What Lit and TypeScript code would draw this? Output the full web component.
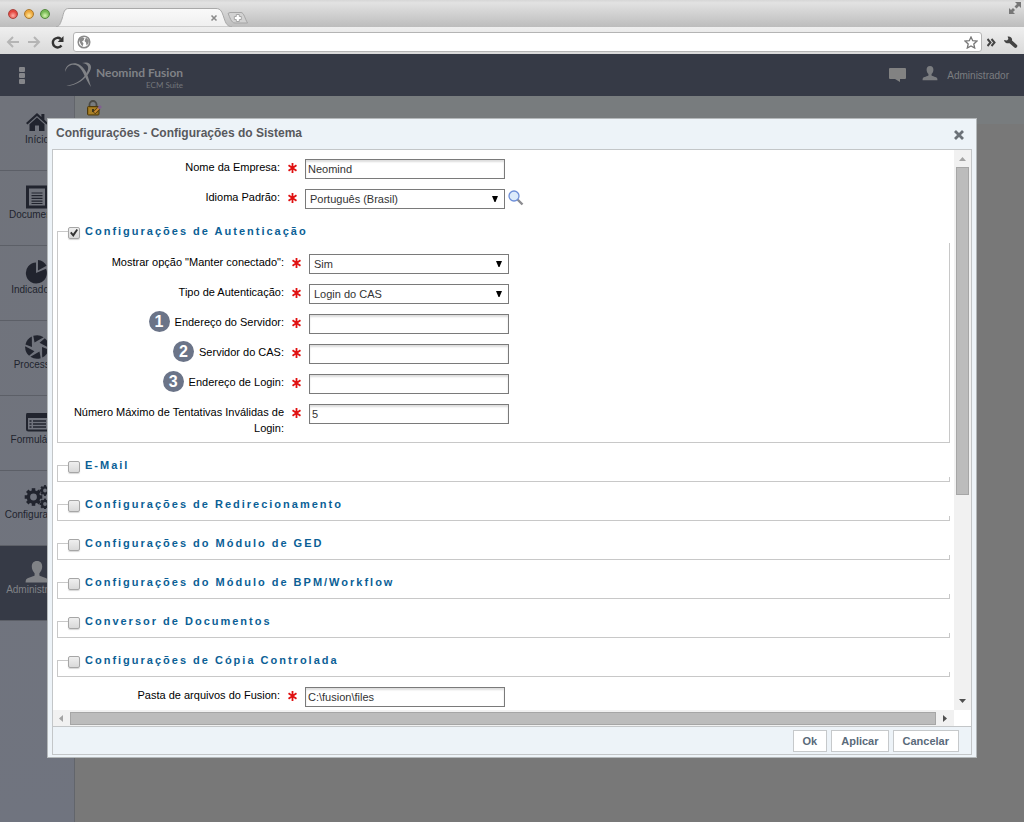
import { LitElement, html, css, svg, nothing, TemplateResult } from "lit";
import { customElement, property } from "lit/decorators.js";

type Field = {
  id: string;
  label: string;
  kind: "text" | "select";
  value: string;
  step?: number;
  search?: boolean;
};

type Section = { id: string; title: string; open: boolean; fields: Field[] };

const NAV = [
  { id: "home", label: "Início" },
  { id: "docs", label: "Documentos" },
  { id: "chart", label: "Indicadores" },
  { id: "process", label: "Processos" },
  { id: "forms", label: "Formulários" },
  { id: "gears", label: "Configurações" },
  { id: "user", label: "Administrador" },
];

const TOP_FIELDS: Field[] = [
  { id: "company", label: "Nome da Empresa:", kind: "text", value: "Neomind" },
  { id: "language", label: "Idioma Padrão:", kind: "select", value: "Português (Brasil)", search: true },
];

const BOTTOM_FIELDS: Field[] = [
  { id: "folder", label: "Pasta de arquivos do Fusion:", kind: "text", value: "C:\\fusion\\files" },
];

const SECTIONS: Section[] = [
  {
    id: "auth",
    title: "Configurações de Autenticação",
    open: true,
    fields: [
      { id: "keep", label: 'Mostrar opção "Manter conectado":', kind: "select", value: "Sim" },
      { id: "type", label: "Tipo de Autenticação:", kind: "select", value: "Login do CAS" },
      { id: "server", label: "Endereço do Servidor:", kind: "text", value: "", step: 1 },
      { id: "cas", label: "Servidor do CAS:", kind: "text", value: "", step: 2 },
      { id: "login", label: "Endereço de Login:", kind: "text", value: "", step: 3 },
      { id: "tries", label: "Número Máximo de Tentativas Inválidas de Login:", kind: "text", value: "5" },
    ],
  },
  { id: "mail", title: "E-Mail", open: false, fields: [] },
  { id: "redirect", title: "Configurações de Redirecionamento", open: false, fields: [] },
  { id: "ged", title: "Configurações do Módulo de GED", open: false, fields: [] },
  { id: "bpm", title: "Configurações do Módulo de BPM/Workflow", open: false, fields: [] },
  { id: "converter", title: "Conversor de Documentos", open: false, fields: [] },
  { id: "copy", title: "Configurações de Cópia Controlada", open: false, fields: [] },
];

const gear = (cx: number, cy: number, r: number, teeth: number, hole: number) => {
  const spokes = [];
  for (let i = 0; i < teeth; i++) {
    spokes.push(svg`<rect x=${cx - r * 0.2} y=${cy - r} width=${r * 0.4} height=${r * 0.5}
      transform=${`rotate(${(360 / teeth) * i} ${cx} ${cy})`} fill="currentColor"/>`);
  }
  return svg`${spokes}<circle cx=${cx} cy=${cy} r=${(r * 0.78 + hole) / 2} fill="none"
    stroke="currentColor" stroke-width=${r * 0.78 - hole}/>`;
};

const blades = [0, 60, 120, 180, 240, 300].map(
  (a) => svg`<path d="M8.300 0.800 A11.800 11.800 0 0 1 18.600 2.200 L9.500 7.600 Z" transform=${`rotate(${a} 12 12)`} />`,
);

const ICONS: Record<string, TemplateResult> = {
  home: html`<svg viewBox="0 0 24 24" width="24" height="24" fill="currentColor"><path d="M12 3 L1 13 L2.5 14.5 L12 6 L21.5 14.5 L23 13 L19.4 9.7 V4 H16.4 V7 Z"/><path d="M12 7.6 L4.5 14.3 V21 H10 V15.5 H14 V21 H19.5 V14.3 Z"/></svg>`,
  docs: html`<svg viewBox="0 0 24 24" width="24" height="24"><path fill="none" stroke="currentColor" stroke-width="3" d="M2.500 2 h19 v20 h-19 z"/><path stroke="currentColor" stroke-width="1.200" d="M6.500 8h11M6.500 10.700h11M6.500 13.400h11M6.500 16.100h11M6.500 18.500h11"/></svg>`,
  chart: html`<svg viewBox="0 0 24 24" width="24" height="24" fill="currentColor"><path d="M11 2.500 V13 L21 8.800 A10.500 10.500 0 1 1 11 2.500 Z"/><path d="M13 0 A11 11 0 0 1 21.500 5.800 L13 10.500 Z"/></svg>`,
  process: html`<svg viewBox="0 0 24 24" width="24" height="24" fill="currentColor">${blades}</svg>`,
  forms: html`<svg viewBox="0 0 24 24" width="24" height="24"><rect x="2" y="4" width="22" height="16.500" rx="1.500" fill="none" stroke="currentColor" stroke-width="2"/><rect x="1.500" y="3" width="22.500" height="5" fill="currentColor"/><path stroke="currentColor" stroke-width="1.300" d="M4.500 11h2M8 11h13M4.500 14h2M8 14h13M4.500 17h2M8 17h13"/></svg>`,
  gears: html`<svg viewBox="0 0 26 24" width="26" height="24">${gear(9.5, 12, 8.8, 8, 3.4)}${gear(21, 5.5, 5.4, 8, 1.9)}${gear(21, 19, 5.4, 8, 1.9)}</svg>`,
  user: html`<svg viewBox="0 0 24 24" width="24" height="24" fill="currentColor"><path d="M12 1 c3.6 0 5.2 2.4 5.2 5.6 0 2.800 -1.200 5.200 -2.800 6.600 v2.300 c1 1.200 7.600 2 8.600 4.300 .3 .8 .4 1.600 .4 2.700 H.6 c0 -1.100 .1 -1.900 .4 -2.700 1 -2.300 7.600 -3.100 8.600 -4.300 v-2.300 C8 11.800 6.800 9.400 6.800 6.600 6.800 3.400 8.400 1 12 1 z"/></svg>`,
};

@customElement("browser-bar")
export class BrowserBar extends LitElement {
  static styles = css`
    :host { display: block; }
    svg { display: block; }
    .tabs {
      display: flex;
      align-items: flex-end;
      height: 27px;
      background: linear-gradient(#d6d6d6, #e2e2e2 10%, #bdbdbd);
    }
    .lights { display: flex; gap: 6px; padding: 0 6px 8px 8px; }
    .light { width: 10px; height: 10px; border-radius: 50%; box-sizing: border-box; }
    .red { background: radial-gradient(circle at 50% 70%, #ffb0a8, #e2463f 60%); border: 1px solid #a8433d; }
    .amber { background: radial-gradient(circle at 50% 70%, #ffe9a0, #eda63a 60%); border: 1px solid #a9772c; }
    .green { background: radial-gradient(circle at 50% 70%, #d6f5b0, #76b955 60%); border: 1px solid #52883c; }
    .grow { flex: 1; }
    .newtab { margin: 0 0 1px -5px; }
    .expand { align-self: flex-start; padding: 2px 3px; }
    .tools {
      display: flex;
      align-items: center;
      height: 27px;
      padding: 3px 6px 0;
      box-sizing: border-box;
      gap: 9px;
      background: linear-gradient(#efefef, #d9d9d9);
    }
    .nav { display: flex; align-items: center; gap: 9px; }
    .address {
      flex: 1;
      display: flex;
      align-items: center;
      gap: 6px;
      height: 20px;
      box-sizing: border-box;
      margin-right: -4px;
      padding: 0 3px;
      background: #fff;
      border: 1px solid #b4b4b4;
      border-radius: 3px;
    }
    .url { flex: 1; min-width: 0; border: 0; padding: 0; outline: 0; background: transparent; font: 11px "Liberation Sans", Arial, sans-serif; }
    .more { display: flex; gap: 8px; }
  `;

  render() {
    return html`
      <div class="tabs">
        <div class="lights"><i class="light red"></i><i class="light amber"></i><i class="light green"></i></div>
        <svg width="176" height="20" viewBox="0 0 176 20">
          <defs><linearGradient id="t" x1="0" y1="0" x2="0" y2="1"><stop offset="0" stop-color="#fafafa"/><stop offset="1" stop-color="#efefef"/></linearGradient></defs>
          <path d="M0 20 C4 19 4 17 6 12 C8 5 8 1.500 13 1.500 H160 C165 1.500 166 5 168 11 C170 17 171 19 176 20 Z" fill="url(#t)" stroke="#a9a9a9"/>
          <path d="M155.500 8.500 l5 5 m0 -5 l-5 5" stroke="#8b8b8b" stroke-width="1.600"/>
        </svg>
        <svg class="newtab" width="22" height="16" viewBox="0 0 22 16">
          <path d="M3 2.500 H14 C17 2.500 18 9 20.500 13 H8 C4 13 3 7 1 3.500 Z" fill="#d2d2d2" stroke="#a5a5a5"/>
          <path d="M9.300 4.500 h3 v2 h2 v3 h-2 v2 h-3 v-2 h-2 v-3 h2 z" fill="#fff" stroke="#a5a5a5"/>
        </svg>
        <span class="grow"></span>
        <svg class="expand" width="12" height="12" viewBox="0 0 12 12" fill="#777"><path d="M6 0 h6 v6 l-2 -2 -2.500 2.500 -2 -2 L8 2 z M0 6 l2 2 2 -2 2 2 -2 2 2 2 H0 z"/></svg>
      </div>
      <div class="tools">
        <div class="nav">
          <svg width="13" height="12" viewBox="0 0 13 12" fill="none" stroke="#b5b5b5" stroke-width="2"><path d="M13 6 H2 M7 1 L2 6 l5 5"/></svg>
          <svg width="13" height="12" viewBox="0 0 13 12" fill="none" stroke="#b5b5b5" stroke-width="2"><path d="M0 6 H11 M6 1 l5 5 -5 5"/></svg>
          <svg width="14" height="13" viewBox="0 0 14 13"><path d="M11.500 9.500 A4.800 4.800 0 1 1 10.800 3" fill="none" stroke="#333" stroke-width="2.400"/><path d="M13.500 0 V6 H7.700 Z" fill="#333"/></svg>
        </div>
        <div class="address">
          <svg width="14" height="14" viewBox="0 0 14 14"><circle cx="7" cy="7" r="5.800" fill="#fff" stroke="#8a8a8a" stroke-width="1.500"/><path d="M2 4 l3 -2 2.500 1 -1 2.500 -1.500 1 1.500 2 -1 3 -1.500 -2 -1.500 -3 z M9 2.500 l3 3 -.500 3 -2 2 -.500 -3 -1.500 -1.500 z" fill="#8a8a8a"/></svg>
          <input class="url" type="text" aria-label="Endereço" />
          <svg width="14" height="13" viewBox="0 0 14 13"><path d="M7 1 L8.700 4.700 13 5.100 9.800 7.900 10.700 12 7 9.900 3.300 12 4.200 7.900 1 5.100 5.300 4.700 Z" fill="#fff" stroke="#777" stroke-width="1.300"/></svg>
        </div>
        <div class="more">
          <svg width="9" height="13" viewBox="0 0 9 13" fill="none" stroke="#444" stroke-width="2"><path d="M.500 3 L3.500 6.500 .500 10 M4.500 3 L7.500 6.500 4.500 10"/></svg>
          <svg width="14" height="13" viewBox="0 0 14 13"><path d="M0 4 l3 .5 1.400 -1.500 -.8 -2.500 C6.500 0 8.600 1.800 8 4.500 L13 9 c1.200 1.400 -.8 3.800 -2.600 2.600 L5.600 7.200 C2.800 7.800 .4 6.600 0 4 z" fill="#444"/></svg>
        </div>
      </div>`;
  }
}

@customElement("form-row")
export class FormRow extends LitElement {
  @property({ attribute: false }) field!: Field;

  static styles = css`
    :host { display: block; }
    svg { display: block; }
    .row {
      display: grid;
      grid-template-columns: 223px 9px 1fr;
      column-gap: 8px;
      align-items: start;
      font-size: 11px;
      line-height: 16px;
    }
    .caption { display: flex; justify-content: flex-end; align-items: center; gap: 5px; text-align: right; color: #000; }
    .step {
      flex: none;
      width: 21px;
      height: 21px;
      margin: -3px 0 -2px;
      border-radius: 50%;
      background: #6b7488;
      color: #fff;
      font-weight: 700;
      font-size: 16px;
      line-height: 21px;
      text-align: center;
    }
    .star { margin-top: 4px; }
    .control { display: flex; gap: 3px; }
    .box {
      width: 200px;
      height: 20px;
      box-sizing: border-box;
      margin: 0;
      padding: 0 2px;
      border: 1px solid #7a7a7a;
      border-radius: 0;
      background: #fff;
      color: #333;
      font: inherit;
      outline: 0;
    }
    .text { box-shadow: inset 0 2px 2px #dedede; }
    .pick { position: relative; }
    .drop { appearance: none; padding: 0 4px; display: block; }
    .arrow { position: absolute; right: 7px; top: 7px; pointer-events: none; }
    .find { border: 0; padding: 0; margin: 1px 0 0; background: none; height: 16px; }
  `;

  render() {
    const f = this.field;
    return html`<div class="row">
      <label class="caption" for=${f.id}>
        ${f.step ? html`<span class="step">${f.step}</span>` : nothing}<span>${f.label}</span>
      </label>
      <svg class="star" width="9" height="10" viewBox="0 0 9 10" stroke="#e01010" stroke-width="1.800"><path d="M4.500 0 V10 M.500 2.200 L8.500 7.800 M8.500 2.200 L.500 7.800"/></svg>
      <div class="control">
        ${f.kind === "text"
          ? html`<input id=${f.id} class="box text" type="text" .value=${f.value} />`
          : html`<div class="pick">
              <select id=${f.id} class="box drop"><option>${f.value}</option></select>
              <svg class="arrow" width="6" height="6" viewBox="0 0 6 6"><path d="M0 0 H6 L3.500 6 H2.500 Z" fill="#000"/></svg>
            </div>`}
        ${f.search
          ? html`<button class="find" type="button" aria-label="Pesquisar">
              <svg width="16" height="16" viewBox="0 0 16 16"><path d="M9.500 9.500 L14.500 14.500" stroke="#8c8c90" stroke-width="2.400"/><circle cx="6" cy="6" r="5" fill="#dcebfb" stroke="#6e8fd8" stroke-width="1.300"/></svg>
            </button>`
          : nothing}
      </div>
    </div>`;
  }
}

@customElement("form-section")
export class FormSection extends LitElement {
  @property({ attribute: false }) section!: Section;

  static styles = css`
    :host { display: block; }
    .set { margin: 0; padding: 0 3px 4px; border: 1px solid #c8c8c8; min-width: 0; }
    /* The heading strip runs past the frame, so the top and right rules stop beside it. */
    .head { width: 100%; height: 24px; margin: 0 0 0 7px; padding: 0; background: #fff; }
    .title {
      display: flex;
      align-items: center;
      gap: 5px;
      color: #0b5f96;
      font-size: 11px;
      font-weight: 700;
      line-height: 24px;
      letter-spacing: 2px;
    }
    .tick {
      appearance: none;
      flex: none;
      width: 12px;
      height: 12px;
      margin: 4px 0 0;
      border: 1px solid #a6a6a6;
      border-radius: 2px;
      background: linear-gradient(#efefef, #d9d9d9);
      box-shadow: 0 1px 1px #d8d8d8;
      display: grid;
      place-items: center;
    }
    .tick:checked::before {
      content: "";
      width: 8px;
      height: 8px;
      background: #333;
      clip-path: polygon(0 50%, 20% 35%, 38% 58%, 82% 0, 100% 14%, 42% 100%);
    }
    .rows { display: grid; gap: 10px; padding: 11px 0 2px; }
  `;

  render() {
    const s = this.section;
    return html`<fieldset class="set">
      <legend class="head">
        <label class="title"><input class="tick" type="checkbox" .checked=${s.open} />${s.title}</label>
      </legend>
      ${s.fields.length
        ? html`<div class="rows">${s.fields.map((f) => html`<form-row .field=${f}></form-row>`)}</div>`
        : nothing}
    </fieldset>`;
  }
}

@customElement("settings-dialog")
export class SettingsDialog extends LitElement {
  static styles = css`
    :host { display: flex; min-width: 0; flex: 1; }
    svg { display: block; }
    .dialog {
      flex: 1;
      min-width: 0;
      display: flex;
      flex-direction: column;
      box-sizing: border-box;
      padding: 0 4px 2px;
      border: 1px solid #b4b8ba;
      background: #edf3f8;
    }
    .bar { display: flex; align-items: center; justify-content: space-between; height: 30px; padding: 0 8px 0 4px; }
    .name { margin: 0 0 2px; font-size: 12px; line-height: 16px; font-weight: 700; color: #58595d; }
    .close { border: 0; padding: 0; margin-top: 2px; background: none; }
    .panel { flex: 1; min-height: 0; display: flex; flex-direction: column; border: 1px solid #c3c6c8; }
    .scroller { flex: 1; min-height: 0; display: grid; grid-template: minmax(0, 1fr) 16px / minmax(0, 1fr) 17px; background: #fff; }
    .form { overflow: hidden; display: flex; flex-direction: column; gap: 10px; padding: 9px 4px 0; }
    .form > * { flex: none; }
    .track { display: flex; align-items: center; background: #f1f1f1; }
    .track.v { flex-direction: column; padding: 7px 0; }
    .track.h { padding: 0 7px 0 6px; }
    .thumb { background: #bcbcbc; border: 1px solid #a6a6a6; box-sizing: border-box; }
    .v .thumb { width: 13px; height: 60%; margin-top: 6px; }
    .h .thumb { flex: 1; height: 13px; margin: 0 7px; }
    .space { flex: 1; }
    .actions {
      display: flex;
      justify-content: flex-end;
      gap: 4px;
      padding: 3px 12px 2px;
      border-top: 1px solid #c3c6c8;
    }
    .action {
      height: 22px;
      margin: 0;
      padding: 0 9px;
      border: 1px solid #c6c9cb;
      background: #fff;
      color: #5a6a7a;
      font: 700 11px "Liberation Sans", Arial, sans-serif;
    }
  `;

  render() {
    return html`<section class="dialog" role="dialog" aria-labelledby="name">
      <header class="bar">
        <h1 class="name" id="name">Configurações - Configurações do Sistema</h1>
        <button class="close" type="button" aria-label="Fechar">
          <svg width="10" height="10" viewBox="0 0 10 10" stroke="#6b7178" stroke-width="2.800"><path d="M1 1 L9 9 M9 1 L1 9"/></svg>
        </button>
      </header>
      <div class="panel">
        <div class="scroller">
          <form class="form">
            ${TOP_FIELDS.map((f) => html`<form-row .field=${f}></form-row>`)}
            ${SECTIONS.map((s) => html`<form-section .section=${s}></form-section>`)}
            ${BOTTOM_FIELDS.map((f) => html`<form-row .field=${f}></form-row>`)}
          </form>
          <div class="track v">
            <svg width="7" height="4" viewBox="0 0 7 4"><path d="M3.500 0 L7 4 H0 Z" fill="#a3a3a3"/></svg>
            <div class="thumb"></div>
            <span class="space"></span>
            <svg width="7" height="4" viewBox="0 0 7 4"><path d="M0 0 H7 L3.500 4 Z" fill="#505050"/></svg>
          </div>
          <div class="track h">
            <svg width="4" height="7" viewBox="0 0 4 7"><path d="M4 0 V7 L0 3.500 Z" fill="#a3a3a3"/></svg>
            <div class="thumb"></div>
            <svg width="4" height="7" viewBox="0 0 4 7"><path d="M0 0 L4 3.500 L0 7 Z" fill="#505050"/></svg>
          </div>
        </div>
        <footer class="actions">
          <button class="action" type="button">Ok</button>
          <button class="action" type="button">Aplicar</button>
          <button class="action" type="button">Cancelar</button>
        </footer>
      </div>
    </section>`;
  }
}

@customElement("app-root")
export class AppRoot extends LitElement {
  static styles = css`
    :host {
      display: flex;
      flex-direction: column;
      min-height: 100vh;
      position: relative;
      background: #787878;
      font-family: "Liberation Sans", Arial, sans-serif;
    }
    svg { display: block; }
    .top {
      display: flex;
      align-items: center;
      height: 42px;
      padding: 0 15px 0 19px;
      background: #363a46;
      color: #7b7d82;
    }
    .menu { border: 0; padding: 0; background: none; }
    .brand { display: flex; align-items: center; margin-left: 40px; flex: 1; }
    .words { display: flex; flex-direction: column; align-items: flex-end; padding: 5px 0 0 4px; font-family: Lato, "Open Sans", sans-serif; }
    .product { font-size: 12px; font-weight: 700; line-height: 14px; color: #808286; }
    .suite { font-size: 8px; line-height: 10px; color: #74767b; }
    .account { display: flex; align-items: center; gap: 9px; margin-left: 16px; color: #7b7d80; text-decoration: none; font-size: 10px; }
    .head { margin-bottom: 3px; }
    .chat { color: #828282; }
    .body { flex: 1; display: flex; }
    .side { width: 74px; flex: none; background: linear-gradient(#70737b, #70747f); border-right: 1px solid #62656b; }
    .item {
      display: flex;
      flex-direction: column;
      align-items: center;
      height: 75px;
      box-sizing: border-box;
      padding: 14px 0 0;
      border-bottom: 1px solid #5c5f67;
      color: #21242e;
      font-size: 10px;
      line-height: 12px;
      text-decoration: none;
    }
    .icon { height: 24px; }
    .active { background: #363a46; color: #808286; }
    .page { flex: 1; }
    .strip { height: 28px; padding: 4px 11px 0; box-sizing: border-box; background: #787c7e; }
    .overlay {
      position: absolute;
      inset: 0;
      display: flex;
      padding: 118px 47px 64px;
    }
  `;

  render() {
    return html`
      <browser-bar></browser-bar>
      <header class="top">
        <button class="menu" type="button" aria-label="Menu">
          <svg width="6" height="17" viewBox="0 0 6 17" fill="#85868a"><rect x="0" y="0" width="6" height="5" rx="1"/><rect x="0" y="6" width="6" height="5" rx="1"/><rect x="0" y="12" width="6" height="5" rx="1"/></svg>
        </button>
        <div class="brand">
          <svg width="27" height="26" viewBox="0 0 27 26" fill="#808286"><path d="M0 10 C0 2 9 -1 15 3 C22 8 23 15 26 25 C20 17 19 9 13 4 C8 1 2 3 0 10 Z"/><path d="M17 1 C24 -1 28 3 25 9 C21 17 12 24 1 24 C12 22 19 17 22.500 9 C24.500 4 22 1.500 17 1 Z"/></svg>
          <div class="words"><span class="product">Neomind Fusion</span><span class="suite">ECM Suite</span></div>
        </div>
        <svg class="chat" width="17" height="14" viewBox="0 0 17 14" fill="currentColor"><path d="M1 0 H16 Q17 0 17 1 V10 Q17 11 16 11 H11 V14 L6 11 H1 Q0 11 0 10 V1 Q0 0 1 0 Z"/></svg>
        <a class="account" href="#">
          <svg class="head" width="16" height="15" viewBox="0 0 24 23" fill="currentColor"><path d="M12 0 c3.600 0 5.200 2.400 5.200 5.600 0 2.800 -1.200 5.200 -2.800 6.600 v2.300 c1 1.200 7.600 2 8.600 4.300 .3 .8 .4 2 .4 3.200 H.6 c0 -1.200 .1 -2.400 .4 -3.200 1 -2.300 7.600 -3.100 8.600 -4.300 v-2.300 C8 10.800 6.800 8.400 6.800 5.600 6.800 2.400 8.400 0 12 0 z"/></svg>
          Administrador
        </a>
      </header>
      <div class="body">
        <nav class="side">
          ${NAV.map(
            (n) => html`<a class="item ${n.id === "user" ? "active" : ""}" href="#"><span class="icon">${ICONS[n.id]}</span>${n.label}</a>`,
          )}
        </nav>
        <main class="page">
          <div class="strip">
            <svg width="16" height="16" viewBox="0 0 16 16"><path d="M3.500 7 V4.500 A3.500 3.500 0 0 1 10.500 4.500 V7" fill="none" stroke="#4a4a46" stroke-width="1.800"/><rect x="1.500" y="6.500" width="11.500" height="8.500" rx="1" fill="#96701a" stroke="#4e3a0c"/><path d="M3 9h8M3 11h8M3 13h8" stroke="#c09a3c" stroke-width=".8"/><path d="M7 9 v3" stroke="#222" stroke-width="1.600"/><path d="M8 13 L13 8" stroke="#4e3a0c" stroke-width="3.600"/><path d="M8.500 12.500 L13 8" stroke="#c98a35" stroke-width="2"/><path d="M12.500 8.500 L15 6" stroke="#80618f" stroke-width="3"/></svg>
          </div>
        </main>
      </div>
      <div class="overlay"><settings-dialog></settings-dialog></div>
    `;
  }
}
